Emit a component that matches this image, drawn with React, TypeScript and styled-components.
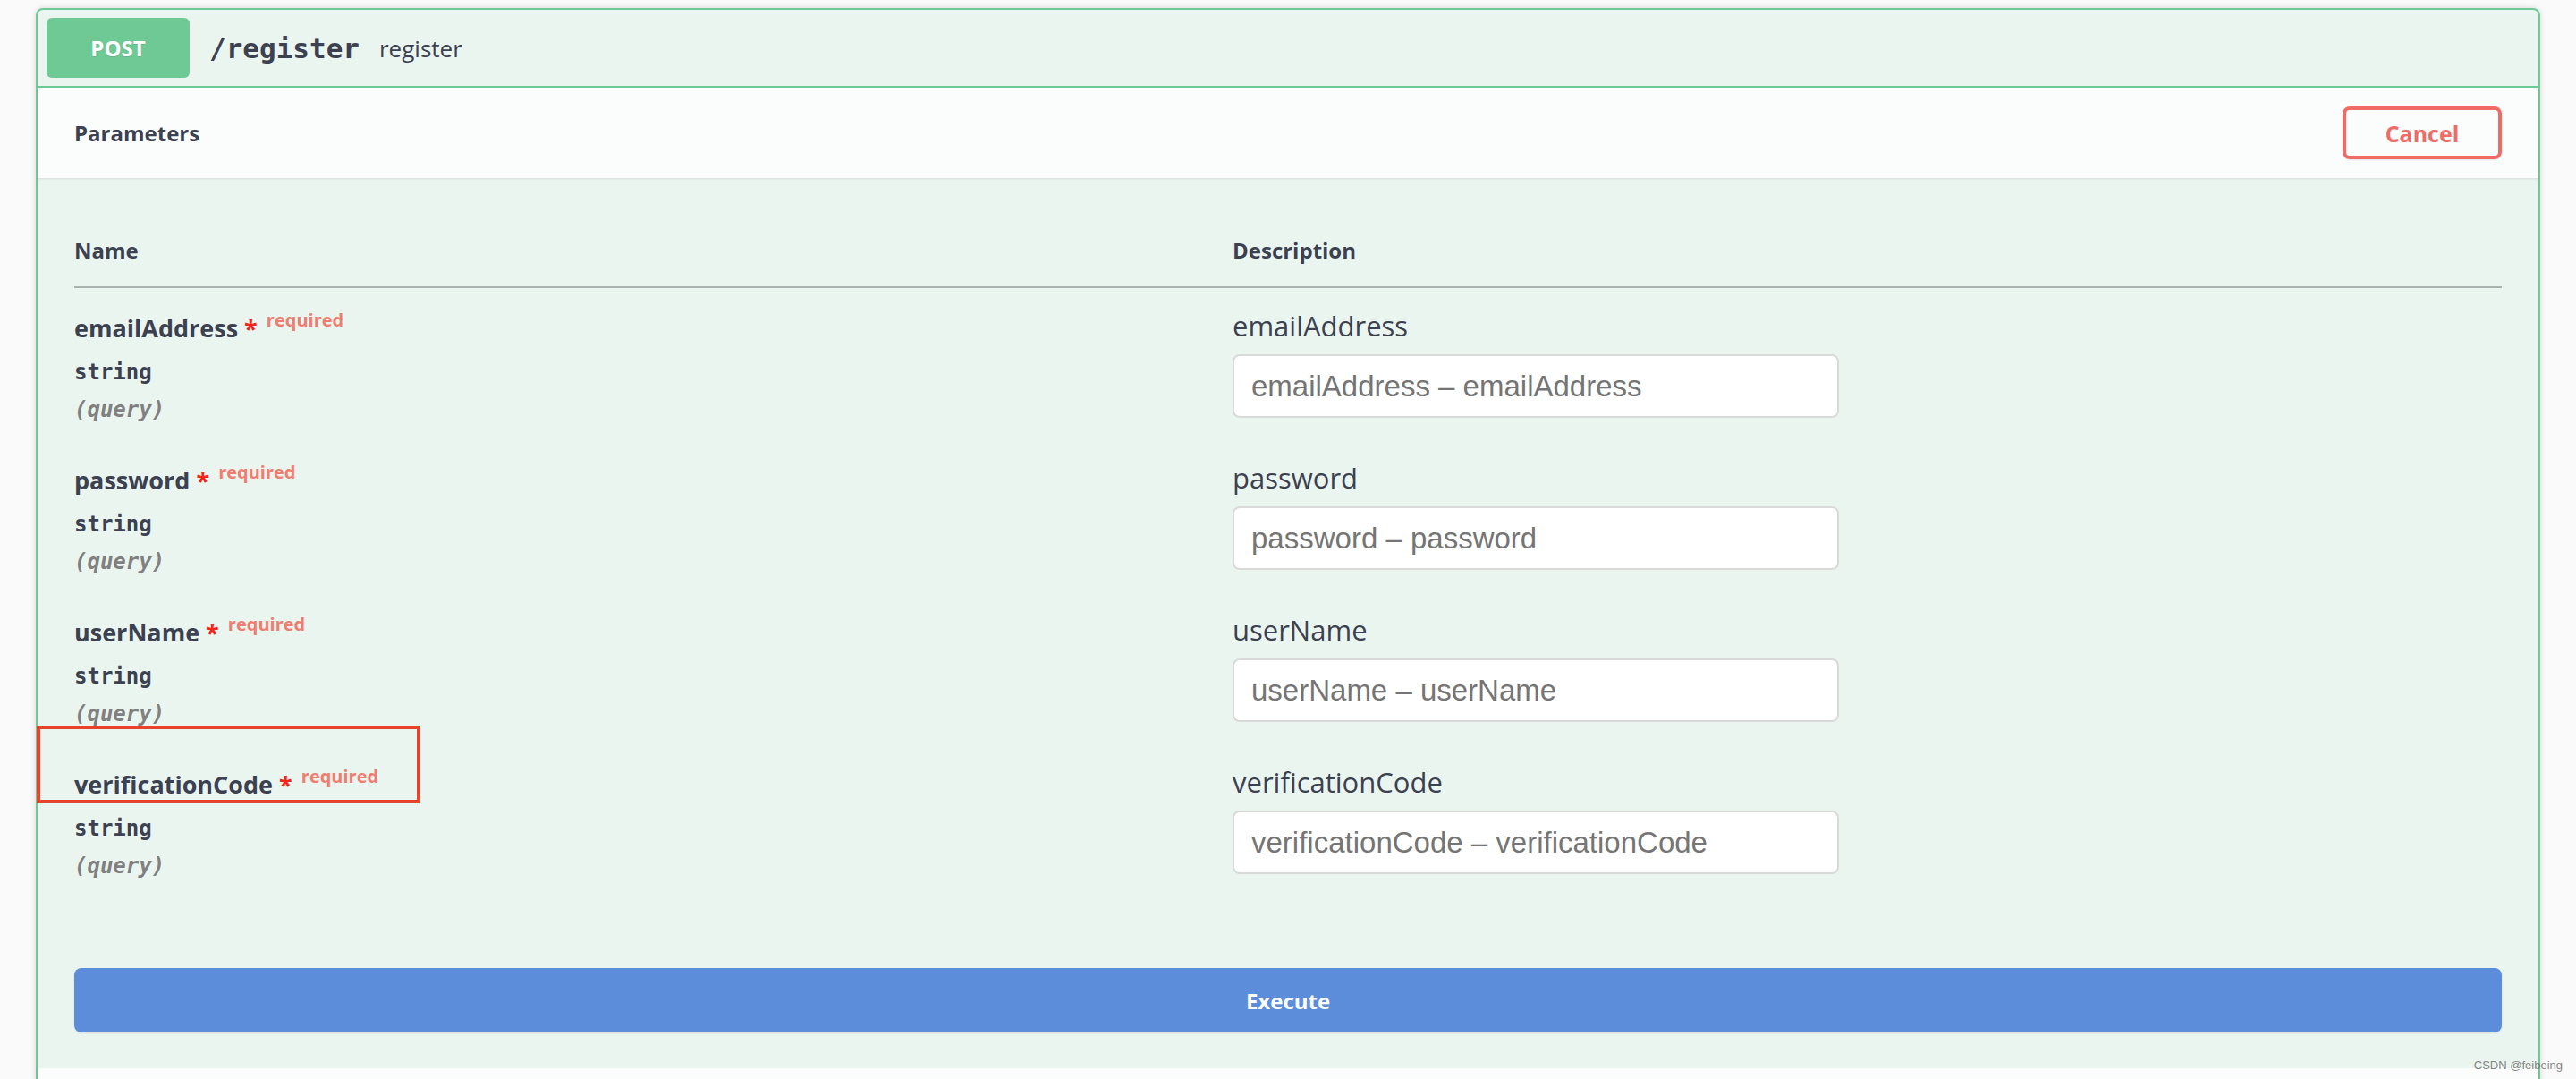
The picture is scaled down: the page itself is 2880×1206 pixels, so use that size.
import styled, { createGlobalStyle } from 'styled-components';

interface Param {
  name: string;
  type: string;
  location: string;
  highlighted?: boolean;
}

const params: Param[] = [
  { name: 'emailAddress', type: 'string', location: 'query' },
  { name: 'password', type: 'string', location: 'query' },
  { name: 'userName', type: 'string', location: 'query' },
  { name: 'verificationCode', type: 'string', location: 'query', highlighted: true },
];

const GlobalStyle = createGlobalStyle`
  html, body {
    margin: 0;
    padding: 0;
    overflow: hidden;
    background: #fafafa;
  }
  body {
    font-family: "Open Sans", sans-serif;
    color: #3b4151;
  }
  * {
    box-sizing: border-box;
  }
`;

const Page = styled.div`
  position: relative;
  width: 2880px;
  height: 1206px;
  padding: 9px 40px 0;
  overflow: hidden;
`;

const Opblock = styled.div`
  border: 2px solid #6fc994;
  border-radius: 8px;
  background: #ebf5ef;
  box-shadow: 0 0 6px rgba(0, 0, 0, 0.15);
`;

const Summary = styled.div`
  display: flex;
  align-items: center;
  padding: 9px 10px;
  border-bottom: 2px solid #6fc994;
`;

const Method = styled.span`
  display: flex;
  align-items: center;
  justify-content: center;
  width: 160px;
  height: 67px;
  border-radius: 6px;
  background: #6fc994;
  color: #fff;
  font: 700 24px "Open Sans", sans-serif;
  text-shadow: 0 1px 0 rgba(0, 0, 0, 0.1);
`;

const Path = styled.span`
  padding: 0 22px;
  font: 700 31px "DejaVu Sans Mono", monospace;
  color: #3b4151;
`;

const SummaryText = styled.span`
  font: 400 26px "Open Sans", sans-serif;
  color: #3b4151;
`;

const SectionHeader = styled.div`
  position: relative;
  display: flex;
  align-items: center;
  justify-content: space-between;
  height: 101px;
  padding: 0 41px;
  background: rgba(255, 255, 255, 0.8);
  box-shadow: 0 1px 2px rgba(0, 0, 0, 0.1);
`;

const SectionTitle = styled.h4`
  margin: 0;
  font: 700 24px "Open Sans", sans-serif;
  color: #3b4151;
`;

const CancelButton = styled.button`
  width: 178px;
  height: 59px;
  padding: 0;
  border: 4px solid #ef6b66;
  border-radius: 8px;
  background: transparent;
  color: #ef6b66;
  font: 700 25px "Open Sans", sans-serif;
  box-shadow: 0 1px 2px rgba(0, 0, 0, 0.1);
`;

const TableContainer = styled.div`
  padding: 40px 41px;
`;

const Columns = styled.div`
  display: grid;
  grid-template-columns: 1295px 1fr;
`;

const HeaderRow = styled(Columns)`
  border-bottom: 2px solid #aab2b0;
`;

const HeaderCell = styled.div`
  padding: 24px 0;
  font: 700 24px "Open Sans", sans-serif;
  line-height: 33px;
  color: #3b4151;
`;

const ParamRow = styled(Columns)`
  position: relative;
  height: 170px;
  padding-top: 22px;
`;

const NameLine = styled.div`
  height: 46px;
  font: 700 27px "Open Sans", sans-serif;
  line-height: 46px;
  color: #3b4151;
  white-space: nowrap;
`;

const Asterisk = styled.span`
  color: #f0261b;
`;

const Required = styled.span`
  position: relative;
  top: -12px;
  padding: 0 10px;
  font-size: 20px;
  line-height: 0;
  color: #ef7d70;
`;

const TypeLine = styled.div`
  height: 32px;
  margin-top: 10px;
  font: 700 24px "DejaVu Sans Mono", monospace;
  line-height: 32px;
  color: #3b4151;
`;

const InLine = styled(TypeLine)`
  font-style: italic;
  color: #808080;
`;

const DescLabel = styled.div`
  height: 40px;
  font: 400 31px "Open Sans", sans-serif;
  line-height: 40px;
  color: #3b4151;
`;

const TextInput = styled.input`
  display: block;
  width: 678px;
  height: 71px;
  margin-top: 12px;
  padding: 0 19px;
  border: 2px solid #d9d9d9;
  border-radius: 8px;
  background: #fff;
  font: 400 33px "Liberation Sans", Arial, sans-serif;
  color: #3b4151;
  outline: none;

  &::placeholder {
    color: #757575;
  }
`;

const Highlight = styled.div`
  position: absolute;
  top: -21px;
  left: -42px;
  width: 429px;
  height: 87px;
  border: 4px solid #e8412c;
  pointer-events: none;
`;

const ExecuteWrapper = styled.div`
  padding: 40px 41px;
`;

const ExecuteButton = styled.button`
  display: block;
  width: 100%;
  height: 72px;
  border: none;
  border-radius: 8px;
  background: #5c8ddb;
  color: #fff;
  font: 700 24px "Open Sans", sans-serif;
  box-shadow: 0 1px 2px rgba(0, 0, 0, 0.1);
`;

const Watermark = styled.div`
  position: absolute;
  right: 15px;
  bottom: 9px;
  font: 400 13px "Liberation Sans", Arial, sans-serif;
  line-height: 1;
  color: rgba(110, 110, 110, 0.85);
`;

const App = () => (
  <>
    <GlobalStyle />
    <Page>
      <Opblock>
        <Summary>
          <Method>POST</Method>
          <Path>/register</Path>
          <SummaryText>register</SummaryText>
        </Summary>

        <SectionHeader>
          <SectionTitle>Parameters</SectionTitle>
          <CancelButton>Cancel</CancelButton>
        </SectionHeader>

        <TableContainer>
          <HeaderRow>
            <HeaderCell>Name</HeaderCell>
            <HeaderCell>Description</HeaderCell>
          </HeaderRow>
          {params.map((p) => (
            <ParamRow key={p.name}>
              <div>
                <NameLine>
                  {p.name}
                  <Asterisk>&nbsp;*</Asterisk>
                  <Required>required</Required>
                </NameLine>
                <TypeLine>{p.type}</TypeLine>
                <InLine>({p.location})</InLine>
              </div>
              <div>
                <DescLabel>{p.name}</DescLabel>
                <TextInput placeholder={`${p.name} – ${p.name}`} />
              </div>
              {p.highlighted && <Highlight />}
            </ParamRow>
          ))}
        </TableContainer>

        <ExecuteWrapper>
          <ExecuteButton>Execute</ExecuteButton>
        </ExecuteWrapper>

        <SectionHeader />
      </Opblock>
      <Watermark>CSDN @feibeing</Watermark>
    </Page>
  </>
);

export default App;
